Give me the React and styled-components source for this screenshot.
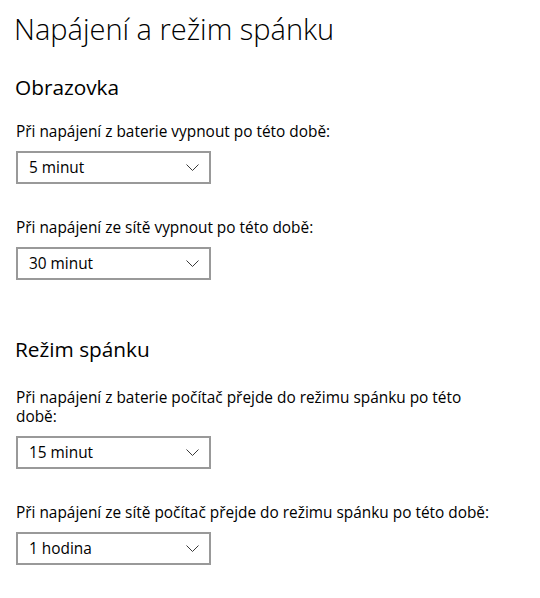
import React from "react";
import styled, { createGlobalStyle } from "styled-components";

const GlobalStyle = createGlobalStyle`
  html, body {
    margin: 0;
    padding: 0;
    background: #ffffff;
  }
  body {
    font-family: "Open Sans", "Noto Sans", sans-serif;
    color: #000000;
  }
`;

const sections = [
  {
    title: "Obrazovka",
    gap: 25,
    headGap: 21,
    settings: [
      { label: "Při napájení z baterie vypnout po této době:", value: "5 minut" },
      { label: "Při napájení ze sítě vypnout po této době:", value: "30 minut" },
    ],
  },
  {
    title: "Režim spánku",
    gap: 55,
    headGap: 25,
    settings: [
      {
        label: "Při napájení z baterie počítač přejde do režimu spánku po této době:",
        value: "15 minut",
      },
      {
        label: "Při napájení ze sítě počítač přejde do režimu spánku po této době:",
        value: "1 hodina",
      },
    ],
  },
];

const Chevron = () => (
  <svg width="13" height="7" viewBox="0 0 13 7">
    <polyline points="0.5,0.5 6.5,6.5 12.5,0.5" fill="none" stroke="#3a3a3a" strokeWidth="1" />
  </svg>
);

const App = () => {
  return (
    <>
      <GlobalStyle />
      <Page>
        <Title>Napájení a režim spánku</Title>
        {sections.map((section) => (
          <Section key={section.title} $gap={section.gap} $headGap={section.headGap}>
            <Heading>{section.title}</Heading>
            {section.settings.map((s) => (
              <Setting key={s.label}>
                <Label>{s.label}</Label>
                <Select>
                  <span>{s.value}</span>
                  <Chevron />
                </Select>
              </Setting>
            ))}
          </Section>
        ))}
      </Page>
    </>
  );
};

const Page = styled.div`
  width: 540px;
  height: 598px;
  box-sizing: border-box;
  padding: 10px 0 0 16px;
  overflow: hidden;
`;

const Title = styled.h1`
  margin: 0 0 0 -2px;
  font-size: 29px;
  line-height: 38px;
  font-weight: 300;
  color: #000;
`;

const Heading = styled.h2`
  margin: 0 0 0 -1px;
  font-size: 20.8px;
  line-height: 28px;
  font-weight: 400;
  color: #000;
`;

const Setting = styled.div`
  max-width: 482px;
  & + & {
    margin-top: 34px;
  }
`;

const Section = styled.section`
  margin-top: ${(p) => p.$gap}px;
  ${Heading} + ${Setting} {
    margin-top: ${(p) => p.$headGap}px;
  }
`;

const Label = styled.div`
  font-size: 15.4px;
  line-height: 19px;
  color: #000;
`;

const Select = styled.div`
  margin-top: 10px;
  width: 195px;
  height: 33px;
  box-sizing: border-box;
  border: 2px solid #999999;
  display: flex;
  align-items: center;
  justify-content: space-between;
  padding: 0 10px 0 11px;
  font-size: 15.4px;
  color: #000;
`;

export default App;
